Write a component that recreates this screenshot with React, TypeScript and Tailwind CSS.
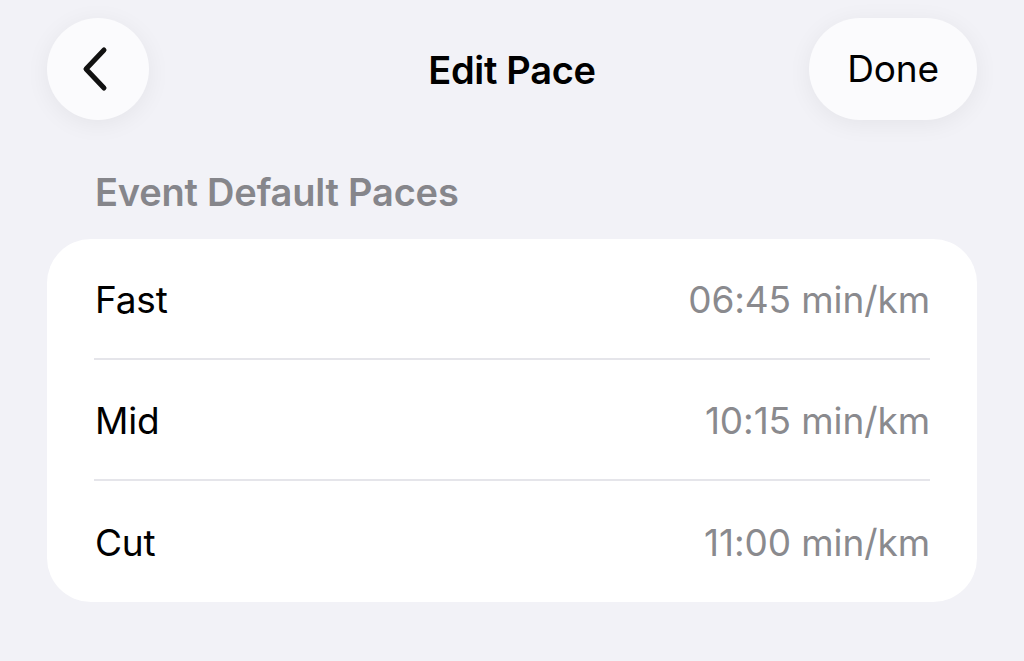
import React from "react";

const rows = [
  { label: "Fast", value: "06:45 min/km" },
  { label: "Mid", value: "10:15 min/km" },
  { label: "Cut", value: "11:00 min/km" },
];

export default function App() {
  return (
    <div
      className="w-[1024px] h-[661px] bg-[#f2f2f7] overflow-hidden flex flex-col"
      style={{ fontFamily: "Inter, 'Noto Sans', sans-serif" }}
    >
      <div className="grid grid-cols-[1fr_auto_1fr] items-center px-[47px] pt-[18px] h-[120px]">
        <div className="flex justify-start">
          <button className="w-[102px] h-[102px] rounded-full bg-[#fbfbfd] flex items-center justify-center shadow-[0_4px_24px_rgba(0,0,0,0.06)]">
            <svg width="30" height="48" viewBox="0 0 30 48" fill="none" className="-ml-[6px]">
              <path d="M24 5 L6 24 L24 43" stroke="#111" strokeWidth="5" strokeLinecap="round" strokeLinejoin="round" />
            </svg>
          </button>
        </div>
        <div className="text-[38px] font-semibold text-black tracking-[-0.3px] text-center pt-[2px]">Edit Pace</div>
        <div className="flex justify-end">
          <button className="w-[168px] h-[102px] rounded-full bg-[#fbfbfd] flex items-center justify-center text-[37px] text-black tracking-[-0.2px] shadow-[0_4px_24px_rgba(0,0,0,0.06)]">
            Done
          </button>
        </div>
      </div>
      <div className="px-[95px] pt-[49px] mb-[24px] text-[38px] font-semibold text-[#86868b] leading-[46px] tracking-[-0.2px]">
        Event Default Paces
      </div>
      <div className="mx-[47px] bg-white rounded-[44px] px-[47px]">
        {rows.map((r, i) => (
          <div
            key={r.label}
            className={`flex items-center justify-between h-[121px] pt-[2px] ${i < rows.length - 1 ? "border-b-2 border-[#e5e5ea]" : ""}`}
          >
            <span className="text-[37px] text-black tracking-[-0.2px] pl-[1px]">{r.label}</span>
            <span className="text-[37px] text-[#8a8a8e] tracking-[-0.1px]">{r.value}</span>
          </div>
        ))}
      </div>
    </div>
  );
}
